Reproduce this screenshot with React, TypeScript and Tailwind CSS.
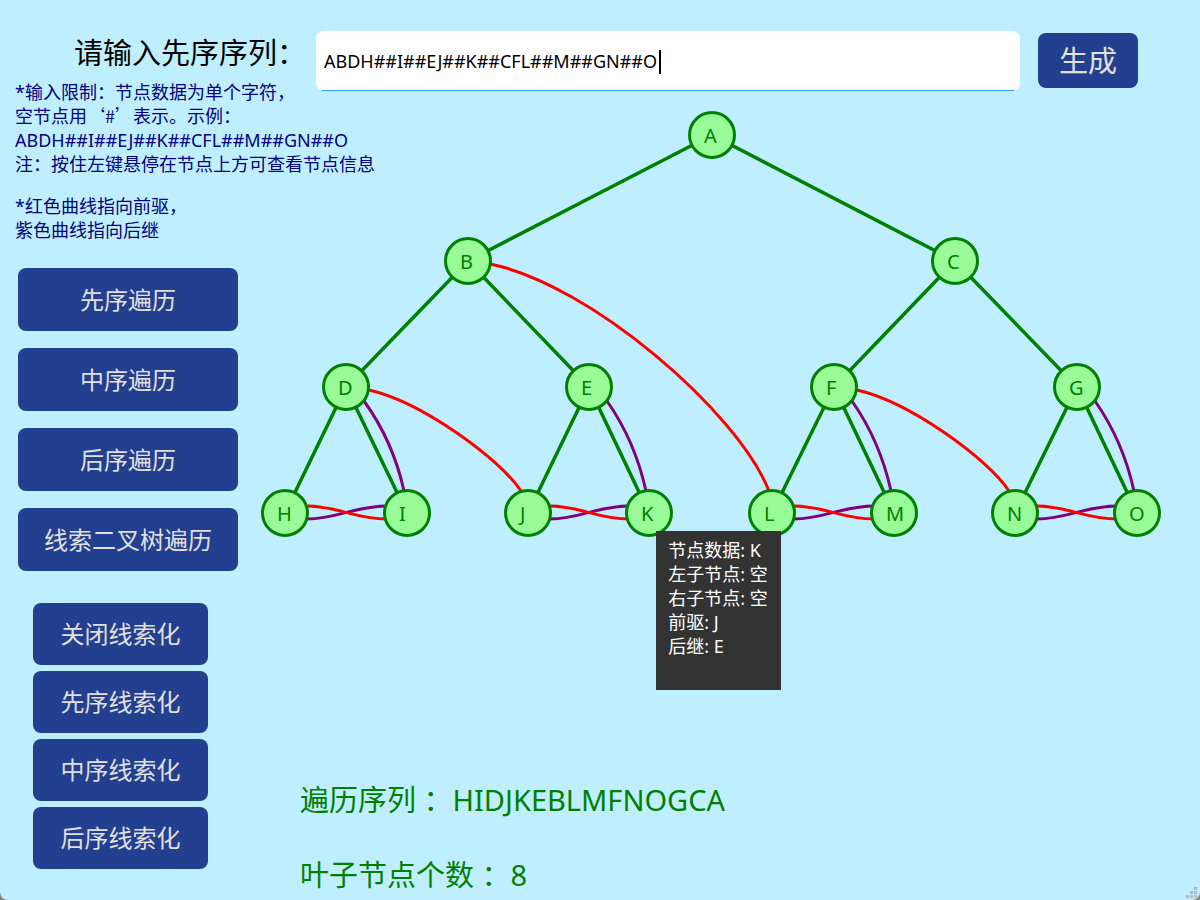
import { useState } from "react";

type TreeNode = { label: string; x: number; y: number };

const nodes: TreeNode[] = [
  { label: "A", x: 712, y: 135 },
  { label: "B", x: 468, y: 261 },
  { label: "C", x: 955, y: 261 },
  { label: "D", x: 346, y: 387 },
  { label: "E", x: 589, y: 387 },
  { label: "F", x: 834, y: 387 },
  { label: "G", x: 1077, y: 387 },
  { label: "H", x: 285, y: 513 },
  { label: "I", x: 407, y: 513 },
  { label: "J", x: 528, y: 513 },
  { label: "K", x: 649, y: 513 },
  { label: "L", x: 772, y: 513 },
  { label: "M", x: 894, y: 513 },
  { label: "N", x: 1015, y: 513 },
  { label: "O", x: 1137, y: 513 },
];

const childrenOf = (i: number) => [2 * i + 1, 2 * i + 2].filter((c) => c < nodes.length);

// Sibling leaves are threaded to each other, the right leaf back to its parent.
const leafPairs = [
  [3, 7, 8],
  [4, 9, 10],
  [5, 11, 12],
  [6, 13, 14],
];

const predecessorArcs = [
  "M490 264 C590 284 738 412 769 491",
  "M369 390 C422 402 500 459 521 491",
  "M857 390 C910 402 988 459 1009 491",
];

const traversals = ["先序遍历", "中序遍历", "后序遍历", "线索二叉树遍历"];
const threadings = ["关闭线索化", "先序线索化", "中序线索化", "后序线索化"];

function TreeCanvas() {
  return (
    <svg viewBox="246 100 954 500" className="block w-full" role="img" aria-label="二叉树">
      <g stroke="#008000" strokeWidth="3.5">
        {nodes.map((n, i) =>
          childrenOf(i).map((c) => (
            <line key={c} x1={n.x} y1={n.y} x2={nodes[c].x} y2={nodes[c].y} />
          )),
        )}
      </g>
      <g fill="none" strokeWidth="3">
        {leafPairs.map(([p, l, r]) => {
          const parent = nodes[p];
          const a = nodes[l];
          const b = nodes[r];
          return (
            <g key={p}>
              <path
                stroke="#800080"
                d={`M${parent.x + 18} ${parent.y + 14} Q${b.x - 14} ${parent.y + 54} ${b.x - 3} ${b.y - 22}`}
              />
              <path
                stroke="#800080"
                d={`M${a.x + 22} ${a.y + 6} C${a.x + 52} ${a.y + 6} ${b.x - 52} ${b.y - 7} ${b.x - 20} ${b.y - 7}`}
              />
              <path
                stroke="#ff0000"
                d={`M${a.x + 22} ${a.y - 7} C${a.x + 52} ${a.y - 7} ${b.x - 52} ${b.y + 6} ${b.x - 20} ${b.y + 6}`}
              />
            </g>
          );
        })}
        {predecessorArcs.map((d) => (
          <path key={d} d={d} stroke="#ff0000" />
        ))}
      </g>
      {nodes.map((n) => (
        <g key={n.label}>
          <circle cx={n.x} cy={n.y} r="22.5" fill="#98fb98" stroke="#008000" strokeWidth="3" />
          <text x={n.x - 8} y={n.y + 8} fill="#008000" className="text-[20px]">
            {n.label}
          </text>
        </g>
      ))}
    </svg>
  );
}

function NodeTooltip() {
  return (
    <div
      role="tooltip"
      className="absolute left-[43%] top-[431px] h-[159px] w-[125px] whitespace-nowrap bg-[#333333] px-3 py-[7px] text-[18px] leading-6 text-white"
    >
      <p>节点数据: K</p>
      <p>左子节点: 空</p>
      <p>右子节点: 空</p>
      <p>前驱: J</p>
      <p>后继: E</p>
    </div>
  );
}

export default function App() {
  const [sequence, setSequence] = useState("ABDH##I##EJ##K##CFL##M##GN##O");

  return (
    <div className="bg-[#858585]">
      <div className="relative min-h-screen rounded-b-lg bg-[#bfefff] font-['Noto_Sans','Noto_Sans_CJK_SC',sans-serif]">
        <header className="flex h-[80px] items-start pr-[62px] pt-[31px]">
          <label
            htmlFor="sequence"
            className="w-[316px] shrink-0 whitespace-nowrap pl-[74px] text-[29px] leading-[44px] text-black"
          >
            请输入先序序列：
          </label>
          <div className="relative h-[60px] flex-1 rounded-lg bg-white">
            <input
              id="sequence"
              value={sequence}
              onChange={(e) => setSequence(e.target.value)}
              className="h-full w-full bg-transparent px-2 text-[18px] text-black outline-none"
            />
            <span className="absolute left-[343px] top-[19px] h-6 w-[2px] bg-black" />
            <span className="absolute inset-x-[6px] bottom-0 h-px bg-[#2f9bff]" />
          </div>
          <button className="ml-[18px] mt-[2px] h-[55px] w-[100px] shrink-0 rounded-lg bg-[#233f8f] text-[29px] text-[#e0e0e0]">
            生成
          </button>
        </header>

        <main className="flex">
          <aside className="w-[246px] shrink-0">
            <div className="flex flex-col gap-[18px] whitespace-nowrap pl-[15px] text-[18px] leading-6 text-[#000080]">
              <p>
                *输入限制：节点数据为单个字符，
                <br />
                空节点用<span className="font-['Noto_Sans_CJK_SC',sans-serif] leading-none">‘#’</span>表示。示例：
                <br />
                ABDH##I##EJ##K##CFL##M##GN##O
                <br />
                注：按住左键悬停在节点上方可查看节点信息
              </p>
              <p>
                *红色曲线指向前驱，
                <br />
                紫色曲线指向后继
              </p>
            </div>
            <div className="mt-[26px] flex flex-col gap-[17px] pl-[18px] pr-2">
              {traversals.map((t) => (
                <button key={t} className="h-[63px] rounded-lg bg-[#233f8f] text-[24px] text-[#e0e0e0]">
                  {t}
                </button>
              ))}
            </div>
            <div className="mt-8 flex flex-col gap-[6px] pl-[33px] pr-[38px]">
              {threadings.map((t) => (
                <button key={t} className="h-[62px] rounded-lg bg-[#233f8f] text-[24px] text-[#e0e0e0]">
                  {t}
                </button>
              ))}
            </div>
          </aside>

          <section className="min-w-0 flex-1 pt-5">
            <div className="relative">
              <TreeCanvas />
              <NodeTooltip />
            </div>
            <div className="mt-[180px] flex flex-col gap-[35px] pl-[54px] text-[29px] leading-10 text-[#008000]">
              <p>遍历序列 ：HIDJKEBLMFNOGCA</p>
              <p>叶子节点个数 ：8</p>
            </div>
          </section>
        </main>

        <svg
          viewBox="0 0 12 12"
          className="absolute bottom-[1px] right-[2px] h-3 w-3"
          fill="#b8b8b8"
          aria-hidden="true"
        >
          <path d="M8 0h3v3h-3zM4 4h3v3h-3zM8 4h3v3h-3zM0 8h3v3h-3zM4 8h3v3h-3zM8 8h3v3h-3z" />
        </svg>
      </div>
    </div>
  );
}
